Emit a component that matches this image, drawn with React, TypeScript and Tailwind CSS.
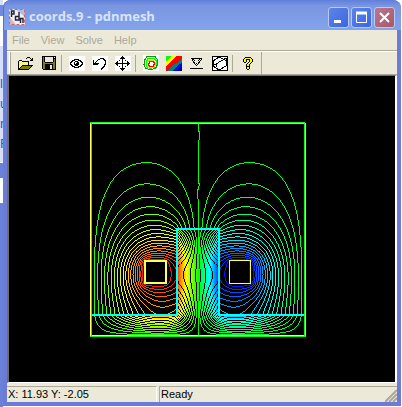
import React from "react";

type Pt = [number, number];

/* ---------- pixel icons ---------- */

const PALETTE: Record<string, string> = {
  K: "#000000",
  Y: "#ffff00",
  W: "#ffffff",
  O: "#808000",
  G: "#ece9d8",
  L: "#ffff9c",
};

function PixelIcon({ rows, white }: { rows: string[]; white?: boolean }) {
  const width = Math.max(...rows.map((r) => r.length));
  const paths: Record<string, string> = {};
  rows.forEach((row, y) =>
    row.split("").forEach((c, x) => {
      if (PALETTE[c]) paths[c] = (paths[c] || "") + `M${x} ${y}h1v1h-1z`;
    })
  );
  return (
    <svg
      width={width}
      height={rows.length}
      viewBox={`0 0 ${width} ${rows.length}`}
      shapeRendering="crispEdges"
      className={white ? "bg-white" : ""}
      aria-hidden="true"
    >
      {Object.entries(paths).map(([c, d]) => (
        <path key={c} d={d} fill={PALETTE[c]} />
      ))}
    </svg>
  );
}

const OPEN = [
  ".........KKK....",
  "........K...K.K.",
  ".............KK.",
  ".KKK........KKK.",
  "KLYLKKKKKKK.....",
  "KYLYLYLYLYK.....",
  "KLYLYLYLYLK.....",
  "KYLYLYLYLYK.....",
  "KLYLKKKKKKKKKKK.",
  "KYLKOOOOOOOOOK..",
  "KLKOOOOOOOOOK...",
  "KKOOOOOOOOOK....",
  "KKKKKKKKKKK.....",
];

const SAVE = [
  "KKKKKKKKKKKKKK",
  "KOKGGGGGGGGKGK",
  "KOKGGGGGGGGKKK",
  "KOKGGGGGGGGKOK",
  "KOKGGGGGGGGKOK",
  "KOKGGGGGGGGKOK",
  "KOOKKKKKKKKOOK",
  "KOOOOOOOOOOOOK",
  "KOOKKKKKKKKOOK",
  "KOOKKKKKGGKOOK",
  "KOOKKKKKGGKOOK",
  "KOOKKKKKGGKOOK",
  "KOOKKKKKGGKOOK",
  ".KKKKKKKKKKKKK",
];

const EYE = [
  "................",
  "................",
  "................",
  ".....KKKKK......",
  "...KKK...KKK....",
  "..KK..KKK..KK...",
  ".KK..K..KK..KK..",
  ".K...K.KKK...K..",
  ".KK..KKKKK..KK..",
  "..KK..KKK..KK...",
  "...KKK...KKK....",
  ".....KKKKK......",
  "................",
  "................",
  "................",
];

const UNDO = [
  "................",
  "................",
  "........KKKK....",
  "......KK...KK...",
  ".K...K......KK..",
  ".K..K........K..",
  ".K.K.........K..",
  ".KKKKKK......K..",
  ".KKKKK......KK..",
  "............K...",
  "...........KK...",
  "..........KK....",
  ".........KK.....",
  ".........K......",
  "................",
];

const MOVE = [
  ".......K........",
  "......KKK.......",
  ".....KKKKK......",
  ".......K........",
  "....K..K..K.....",
  "..K....K....K...",
  ".KK....K....KK..",
  "KKKKKKKKKKKKKKK.",
  ".KK....K....KK..",
  "..K....K....K...",
  "....K..K..K.....",
  ".......K........",
  ".....KKKKK......",
  "......KKK.......",
  ".......K........",
];

const NORMALS = [
  ".KKKKKKKKKKK.",
  "..KK.....K.K.",
  "..K.K...K.K..",
  "...K.....K...",
  "...KK...KK...",
  "....K.K.K....",
  ".....K.K.....",
  "......K......",
  ".............",
  ".............",
  "KKKKKKKKKKKKK",
];

const HELP = [
  "..KKKKKK..",
  ".KYYYYYYK.",
  "KYYKKKKYYK",
  "KYYK..KYYK",
  "KYYK..KYYK",
  ".KK..KYYK.",
  "....KYYK..",
  "...KYYK...",
  "...KYYK...",
  "...KKKK...",
  "...KYYK...",
  "...KYYK...",
  "....KK....",
];

function ContourIcon() {
  return (
    <svg width="16" height="16" viewBox="0 0 16 16" className="bg-white" shapeRendering="crispEdges" fill="none" aria-hidden="true">
      <path d="M4 1.500h8l2.500 3v5l-2 4-5 1-5-1-1.500-4 1-5z" stroke="#00a000" />
      <path d="M5 3.500h6l2 2v4l-2 3-4 1-3.500-2v-5z" stroke="#00ff00" />
      <path d="M6 5.500h4l2 2v3l-2 2H6l-2-2v-3z" stroke="#ffd000" />
      <path d="M7 6.500h3l1.500 2-1.500 3H7l-1.500-2z" stroke="#ff0000" strokeWidth="1.500" />
    </svg>
  );
}

function RainbowIcon() {
  return (
    <svg width="16" height="15" viewBox="0 0 16 15" shapeRendering="crispEdges" aria-hidden="true">
      <path fill="#ff0000" d="M0 0h16v15H0z" />
      <path fill="#00ff00" d="M0 0h5L0 5z" />
      <path fill="#ffff00" d="M5 0h5L6 5 0 10V5z" />
      <path fill="#008080" d="M16 3v5l-4 2-5 5H2l5-6 4-2z" />
      <path fill="#0000ff" d="M16 7v8H7l4-5z" />
      <path fill="#000080" d="M16 11v4h-5z" />
    </svg>
  );
}

function MeshIcon() {
  return (
    <svg width="16" height="15" viewBox="0 0 16 15" className="bg-white" shapeRendering="crispEdges" fill="none" stroke="#000" aria-hidden="true">
      <path d="M.5.5h15v14H.5zM1 5l6-4M7 1l8 4M14 2L4 8M1 9l3-1M2 5l-1 5M1 10l6 4M7 14l7-4V2M4 8v3" />
    </svg>
  );
}

function AppIcon() {
  return (
    <svg width="16" height="16" viewBox="0 0 16 16" className="bg-white" aria-hidden="true">
      <path d="M0 0h16v16H0z" fill="#f4eef4" />
      <path d="M6 0h10v8z" fill="#b4bce0" />
      <path d="M0 7l7 9H0z" fill="#d8b4bc" />
      <path d="M.5.5h15v15H.5z" fill="none" stroke="#c06878" strokeDasharray="3 2" />
      <path d="M2.500 8V2h2.500v3H3M10 3v8H6.500V7.500H10M11.500 14V9.500h2.500V14" fill="none" stroke="#202030" strokeWidth="1.400" />
    </svg>
  );
}

/* ---------- field plot ---------- */

const NX = 108;
const NY = 214;
const LEVELS = 20;
const CORE_WEIGHT = 0.12;
const ELECTRODE = { x0: 54, x1: 76, y0: 139, y1: 161 };
const CORE = { x: 87, top: 107, base: 193 };

const inElectrode = (x: number, y: number) =>
  x >= ELECTRODE.x0 && x <= ELECTRODE.x1 && y >= ELECTRODE.y0 && y <= ELECTRODE.y1;

// Successive over-relaxation on the left half; the right half is its mirror with opposite sign.
function solveField(): Float64Array {
  const w = NX + 1;
  const u = new Float64Array(w * (NY + 1));
  const k = new Float64Array(w * (NY + 1));
  for (let y = 0; y < NY; y++)
    for (let x = 0; x < NX; x++)
      k[y * w + x] = y >= CORE.base || (x >= CORE.x && y >= CORE.top) ? CORE_WEIGHT : 1;
  for (let y = 0; y <= NY; y++)
    for (let x = 0; x <= NX; x++) if (inElectrode(x, y)) u[y * w + x] = 1;
  for (let it = 0; it < 600; it++)
    for (let y = 1; y < NY; y++)
      for (let x = 1; x < NX; x++) {
        if (inElectrode(x, y)) continue;
        const i = y * w + x;
        const a = k[i - w - 1];
        const b = k[i - w];
        const c = k[i - 1];
        const d = k[i];
        const v =
          ((a + b) * u[i - w] + (c + d) * u[i + w] + (a + c) * u[i - 1] + (b + d) * u[i + 1]) /
          (2 * (a + b + c + d));
        u[i] += 1.94 * (v - u[i]);
      }
  return u;
}

function contour(u: Float64Array, level: number): [Pt, Pt][] {
  const w = NX + 1;
  const s = 2;
  const out: [Pt, Pt][] = [];
  for (let y = 0; y + s <= NY; y += s)
    for (let x = 0; x + s <= NX; x += s) {
      const c: Pt[] = [[x, y], [x + s, y], [x + s, y + s], [x, y + s]];
      const v = c.map(([px, py]) => u[py * w + px] - level);
      const hits: Pt[] = [];
      for (let e = 0; e < 4; e++) {
        const f = (e + 1) % 4;
        if (v[e] >= 0 !== v[f] >= 0) {
          const t = v[e] / (v[e] - v[f]);
          hits.push([c[e][0] + t * (c[f][0] - c[e][0]), c[e][1] + t * (c[f][1] - c[e][1])]);
        }
      }
      for (let h = 0; h + 1 < hits.length; h += 2) out.push([hits[h], hits[h + 1]]);
    }
  return out;
}

// Walks each segment along its longer axis and marks one pixel per step.
function rasterize(segs: [Pt, Pt][], fx: (x: number) => number): string {
  const seen = new Set<string>();
  let d = "";
  for (const [a, b] of segs) {
    const dx = b[0] - a[0];
    const dy = b[1] - a[1];
    const wide = Math.abs(dx) > Math.abs(dy);
    const [p, q] = (wide ? dx : dy) > 0 ? [a, b] : [b, a];
    const axis = wide ? 0 : 1;
    for (let m = Math.ceil(p[axis]); m <= Math.floor(q[axis]); m++) {
      const t = (m - p[axis]) / (q[axis] - p[axis] || 1);
      const x = wide ? m : Math.round(p[0] + t * (q[0] - p[0]));
      const y = wide ? Math.round(p[1] + t * (q[1] - p[1])) : m;
      const key = `${fx(x)} ${y}`;
      if (!seen.has(key)) {
        seen.add(key);
        d += `M${key}h1v1h-1z`;
      }
    }
  }
  return d;
}

function levelColor(t: number): string {
  const up = Math.round(255 * Math.min(1, Math.abs(t) * 2));
  const down = Math.round(255 * Math.min(1, 2 - Math.abs(t) * 2));
  return t > 0 ? `rgb(${up},${down},0)` : `rgb(0,${down},${up})`;
}

const CURVES = (() => {
  const u = solveField();
  const curves: { d: string; color: string }[] = [];
  for (let n = 1; n < LEVELS; n++) {
    const segs = contour(u, n / LEVELS);
    curves.push({ d: rasterize(segs, (x) => x), color: levelColor(n / LEVELS) });
    curves.push({ d: rasterize(segs, (x) => 2 * NX - 1 - x), color: levelColor(-n / LEVELS) });
  }
  return curves;
})();

function FieldPlot() {
  return (
    <svg width="216" height="215" viewBox="0 0 216 215" shapeRendering="crispEdges" fill="none" role="img" aria-label="Equipotential contours">
      {CURVES.map((c, i) => (
        <path key={i} d={c.d} fill={c.color} />
      ))}
      <path d="M108.500 1v7l1 3v6l-1 2v42l1 1-1 4-1 3v6l1 4v134" stroke="#00ff00" />
      <path d="M2 193h85V107h42v86h85" stroke="#00ffff" strokeWidth="2" />
      <path d="M1.500 1.500h213v212H1.500z" stroke="#ffff60" />
      <path d="M.5 214V1M215.500 1v213" stroke="#ffff60" />
      <path d="M1.500 214V.5M0 .5h215M214.500 0v214M0 214.500h216" stroke="#00ff00" />
      <path d="M55 139h21v22H55z" stroke="#ffff60" strokeWidth="2" fill="#000" />
      <path d="M139.500 138.500h21v23h-21z" stroke="#ffff60" fill="#000" />
      <path d="M159.500 139v22" stroke="#0000ff" />
    </svg>
  );
}

/* ---------- window chrome ---------- */

function ToolButton({ label, children }: { label: string; children: React.ReactNode }) {
  return (
    <button type="button" aria-label={label} className="flex h-[22px] w-[23px] items-center justify-center">
      {children}
    </button>
  );
}

const Separator = () => <div className="mr-[3px] ml-px h-[17px] w-px bg-[#aca899]" />;

function CaptionButton({ label, close, children }: { label: string; close?: boolean; children: React.ReactNode }) {
  return (
    <button
      type="button"
      aria-label={label}
      className={`flex h-[21px] w-[21px] items-center justify-center rounded-[3px] border border-[#b9c8f4] bg-linear-to-br ${
        close ? "from-[#b87890] to-[#a85868]" : "from-[#5c84e8] to-[#3c66e0]"
      }`}
    >
      <svg width="13" height="13" viewBox="0 0 13 13" fill="none" stroke="#fff" aria-hidden="true">
        {children}
      </svg>
    </button>
  );
}

function Desktop() {
  return (
    <div className="flex w-[3px] shrink-0 flex-col overflow-hidden bg-[#6b80d8] text-[13px] leading-5 text-[#215dc6]" aria-hidden="true">
      <div className="h-[5px] bg-[#d6dff7]" />
      <div className="h-[11px] bg-[#6f8ae0]" />
      <div className="h-[30px] bg-white" />
      <div className="h-[116px] bg-[#d6dff7] pt-7">
        <div>l</div>
        <div>u</div>
        <div>r</div>
        <div>F</div>
      </div>
      <div className="h-px bg-white" />
      <div className="h-[15px]" />
      <div className="h-[25px] bg-white" />
    </div>
  );
}

export default function App() {
  return (
    <div className="flex min-h-screen bg-white font-['Liberation_Sans',Arial,sans-serif] text-[11px] text-black">
      <Desktop />
      <div className="mr-px mb-px flex min-w-0 flex-1 flex-col rounded-t-lg bg-[#6a7cd8]">
        <header className="flex h-[30px] shrink-0 items-center rounded-t-lg border-l border-[#5a6cd0] bg-linear-to-b from-[#5f7fdc] via-[#7b96e0] via-20% to-[#82a4ec] pt-[4px] pr-[6px] pl-[5px]">
          <AppIcon />
          <h1 className="ml-1 min-w-0 flex-1 truncate font-['Open_Sans','Noto_Sans',sans-serif] text-[13px] font-bold text-[#d8e4f8]">
            coords.9 - pdnmesh
          </h1>
          <div className="flex gap-[2px]">
            <CaptionButton label="Minimize">
              <path d="M2 10.500h7" strokeWidth="3" />
            </CaptionButton>
            <CaptionButton label="Maximize">
              <path d="M1.500 1v10.500h10V1" />
              <path d="M1 2h11" strokeWidth="3" />
            </CaptionButton>
            <CaptionButton label="Close" close>
              <path d="M2 2l9 9M11 2l-9 9" strokeWidth="2" />
            </CaptionButton>
          </div>
        </header>

        <div className="flex flex-1 flex-col border-x-4 border-b-4 border-[#6a7cd8]">
          <div className="flex flex-1 flex-col bg-[#ece9d8]">
            <nav className="flex h-[21px] items-center gap-[11px] border-b border-[#aca899] pb-px pl-[5px] leading-4 text-[#aca899]">
              {["File", "View", "Solve", "Help"].map((item) => (
                <button key={item} type="button">
                  {item}
                </button>
              ))}
            </nav>

            <div className="flex h-[24px] items-center border-y border-t-white border-b-[#aca899]" role="toolbar">
              <div className="mr-[3px] ml-[2px] h-[22px] w-[2px] border-r border-[#aca899] bg-white" />
              <ToolButton label="Open"><PixelIcon rows={OPEN} /></ToolButton>
              <ToolButton label="Save"><PixelIcon rows={SAVE} /></ToolButton>
              <Separator />
              <ToolButton label="View"><PixelIcon rows={EYE} white /></ToolButton>
              <ToolButton label="Undo"><PixelIcon rows={UNDO} white /></ToolButton>
              <ToolButton label="Move"><PixelIcon rows={MOVE} white /></ToolButton>
              <Separator />
              <ToolButton label="Contour"><ContourIcon /></ToolButton>
              <ToolButton label="Color map"><RainbowIcon /></ToolButton>
              <ToolButton label="Normals"><PixelIcon rows={NORMALS} /></ToolButton>
              <ToolButton label="Mesh"><MeshIcon /></ToolButton>
              <Separator />
              <ToolButton label="Help"><PixelIcon rows={HELP} /></ToolButton>
              <div className="ml-[2px] h-[22px] w-px bg-[#aca899]" />
            </div>

            <main className="flex flex-1 items-center justify-center border-t border-r-2 border-b border-l-2 border-t-[#716f64] border-r-white border-b-white border-l-[#716f64] bg-black pr-2">
              <FieldPlot />
            </main>

            <footer className="flex h-[19px] gap-[2px] pt-[3px] leading-[15px]">
              <div className="w-[150px] border-t border-r border-t-[#aca899] border-r-white pl-px">X: 11.93 Y: -2.05</div>
              <div className="flex flex-1 justify-between border-t border-l border-[#aca899] pl-px">
                <span>Ready</span>
                <svg width="12" height="13" viewBox="0 0 12 13" stroke="#aca899" strokeWidth="2" className="self-end" aria-hidden="true">
                  <path d="M0 13L12 1M4 13l8-8M8 13l4-4" />
                </svg>
              </div>
            </footer>
          </div>
        </div>
      </div>
    </div>
  );
}
